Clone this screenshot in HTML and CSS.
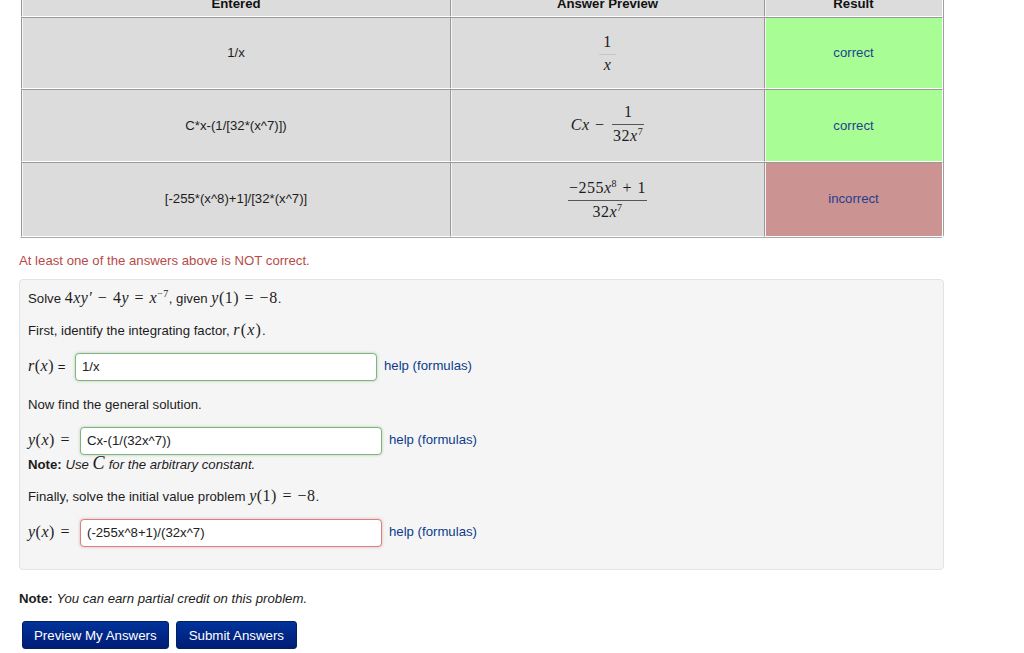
FILE: index.html
```html
<!DOCTYPE html>
<html lang="en">
<head>
<meta charset="utf-8">
<title>Problem</title>
<link rel="stylesheet" href="styles.css">
</head>
<body>
<main class="page">
  <table class="results">
    <colgroup><col class="c1"><col class="c2"><col class="c3"></colgroup>
    <thead>
      <tr><th>Entered</th><th>Answer Preview</th><th>Result</th></tr>
    </thead>
    <tbody>
      <tr class="r1">
        <td>1/x</td>
        <td><span class="frac small"><span class="num">1</span><span class="den"><i>x</i></span></span></td>
        <td class="ok">correct</td>
      </tr>
      <tr class="r2">
        <td>C*x-(1/[32*(x^7)])</td>
        <td><span class="m lead"><i>Cx</i> − </span><span class="frac"><span class="num">1</span><span class="den">32<i>x</i><sup>7</sup></span></span></td>
        <td class="ok">correct</td>
      </tr>
      <tr class="r3">
        <td class="up">[-255*(x^8)+1]/[32*(x^7)]</td>
        <td><span class="frac"><span class="num">−255<i>x</i><sup>8</sup> + 1</span><span class="den">32<i>x</i><sup>7</sup></span></span></td>
        <td class="bad up">incorrect</td>
      </tr>
    </tbody>
  </table>

  <p class="warn">At least one of the answers above is NOT correct.</p>

  <section class="problem">
    <p>Solve <span class="m">4<i>xy′</i> − 4<i>y</i> = <i>x</i><sup>−7</sup></span>, given <span class="m"><i>y</i>(1) = −8</span>.</p>
    <p class="gap">First, identify the integrating factor, <span class="m wide"><i>r</i>(<i>x</i>)</span>.</p>
    <div class="ans gap-s a1">
      <span class="lbl"><span class="m"><i>r</i>(<i>x</i>)</span> =</span>
      <span class="box good">1/x</span>
      <a class="help">help (formulas)</a>
    </div>
    <p class="gap-l">Now find the general solution.</p>
    <div class="ans gap-s">
      <span class="lbl"><span class="m"><i>y</i>(<i>x</i>) =</span></span>
      <span class="box good">Cx-(1/(32x^7))</span>
      <a class="help">help (formulas)</a>
    </div>
    <p><b>Note:</b> <em>Use <span class="m big">C</span> for the arbitrary constant.</em></p>
    <p class="gap">Finally, solve the initial value problem <span class="m"><i>y</i>(1) = −8</span>.</p>
    <div class="ans gap-s">
      <span class="lbl"><span class="m"><i>y</i>(<i>x</i>) =</span></span>
      <span class="box wrong">(-255x^8+1)/(32x^7)</span>
      <a class="help">help (formulas)</a>
    </div>
  </section>

  <p class="note2"><b>Note:</b> <em>You can earn partial credit on this problem.</em></p>

  <div class="actions">
    <button class="btn">Preview My Answers</button>
    <button class="btn alt">Submit Answers</button>
  </div>
</main>
</body>
</html>
```
FILE: styles.css
```css
html, body { margin: 0; padding: 0; background: #fff; }
body {
  height: 653px;
  overflow: hidden;
  font-family: "Liberation Sans", Arial, sans-serif;
  font-size: 13.2px;
  line-height: 18px;
  color: #1c1c1c;
}
.page { padding-left: 19px; margin-top: -7px; width: 925px; }
p { margin: 0; }

.results {
  margin-left: 1px;
  width: 924px;
  table-layout: fixed;
  border-collapse: separate;
  border-spacing: 0;
  border-top: 0;
  border-right: 1px solid #a0a0a0;
  border-bottom: 1px solid #a8a8a8;
  border-left: 1px solid transparent;
  border-radius: 0 0 4px 0;
  text-align: center;
}
.c1 { width: 429px; }
.c2 { width: 314px; }
.c3 { width: 179px; }
.results th, .results td {
  box-sizing: border-box;
  padding: 0;
  background: #dcdcdc;
  vertical-align: middle;
  border-left: 1px solid #999;
  border-top: 1px solid #999;
  border-bottom: 1px solid #fff;
  box-shadow: inset 1px 0 0 #f4f4f4;
}
.results th:last-child, .results td:last-child { border-right: 1px solid #fff; }
.results th {
  height: 24px;
  padding-bottom: 2px;
  border-top: 0;
  font-weight: 700;
  color: #111;
}
.r1 td { height: 72px; }
.r2 td { height: 73px; }
.r3 td { height: 75px; }
.results .up { padding-bottom: 2px; }
.results .ok { background: #a8fe94; color: #1f3f8f; }
.results .bad { background: #cc9393; color: #1f3f8f; }

.m {
  font-family: "Liberation Serif", "Times New Roman", serif;
  font-size: 16px;
  line-height: 16px;
  letter-spacing: .5px;
  word-spacing: 1px;
}
.wide { letter-spacing: 1.2px; }
sup { font-size: 10px; line-height: 0; }
.big { font-size: 18px; }
.lead { margin-right: 2px; vertical-align: -1px; }
.frac {
  display: inline-flex;
  flex-direction: column;
  vertical-align: middle;
  font-family: "Liberation Serif", "Times New Roman", serif;
  font-size: 16px;
  letter-spacing: .5px;
  word-spacing: 1px;
  color: #1c1c1c;
  text-align: center;
}
.frac .num { padding: 0 1px 3px; border-bottom: 1px solid #555; line-height: 18px; }
.frac .den { padding: 2px 1px 0; line-height: 18px; }
.r2 .frac { margin-bottom: 4px; }
.small .num { padding: 0 4px 3px; border-bottom-color: #c8c8c8; }
.small .den { padding-top: 1px; }

.warn { margin-top: 14px; color: #b94a48; }

.problem {
  box-sizing: border-box;
  margin-top: 9px;
  width: 925px;
  height: 291px;
  padding: 10px 8px 0;
  background: #f5f5f5;
  border: 1px solid #e3e3e3;
  border-radius: 4px;
  display: flex;
  flex-direction: column;
  align-items: flex-start;
}
.gap { margin-top: 14px; }
.gap-s { margin-top: 13px; }
.gap-l { margin-top: 15px; }

.ans { display: flex; align-items: center; height: 28px; }
.lbl { width: 52px; white-space: pre; }
.a1 .lbl { width: 47px; }
.box {
  box-sizing: border-box;
  width: 302px;
  height: 28px;
  padding: 0 6px;
  display: flex;
  align-items: center;
  background: #fff;
  border-radius: 4px;
  color: #222;
}
.good { border: 1px solid #7fb57f; box-shadow: 0 0 3px rgba(90,160,90,.45); }
.wrong { border: 1px solid #d98080; box-shadow: 0 0 3px rgba(200,80,80,.45); }
.help { margin: 0 0 2px 7px; color: #0c3b8c; }

.note2 { margin-top: 20px; }
.actions { display: flex; gap: 7px; margin-top: 13px; padding-left: 3px; }
.btn {
  height: 28px;
  padding: 0 11px;
  border: 1px solid #00215f;
  border-radius: 3px;
  background: linear-gradient(#00339a, #001c76);
  color: #fff;
  font-family: "Liberation Sans", Arial, sans-serif;
  font-size: 13.3px;
}
.alt { padding: 0 12px; }
```
